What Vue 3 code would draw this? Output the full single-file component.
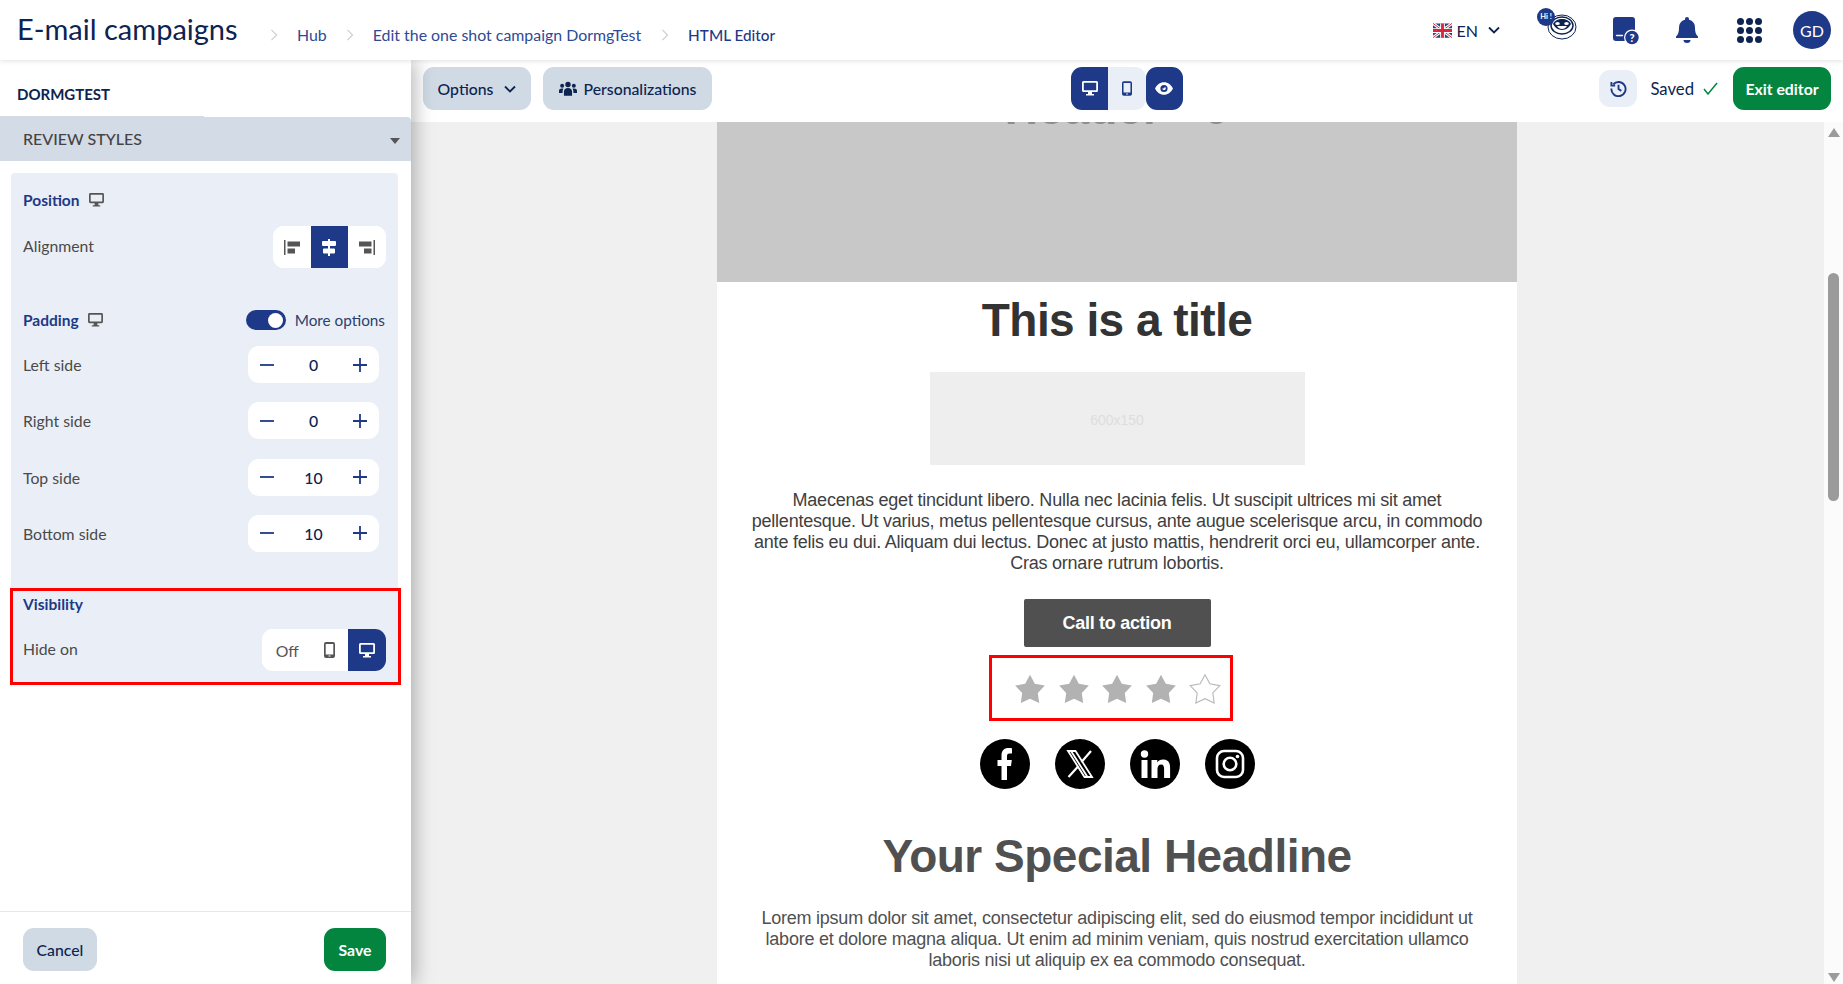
<script setup>
const sides = [
  { label: 'Left side', value: 0 },
  { label: 'Right side', value: 0 },
  { label: 'Top side', value: 10 },
  { label: 'Bottom side', value: 10 }
]
const starPath = 'M12 2L15.41 8.31 22.46 9.6 17.52 14.79 18.47 21.9 12 18.8 5.53 21.9 6.48 14.79 1.54 9.6 8.59 8.31z'
</script>

<template>
  <div class="page">
    <header class="topbar">
      <h1 class="app-title">E-mail campaigns</h1>
      <nav class="crumbs">
        <svg class="crumb-sep" viewBox="0 0 8 14"><path d="M1 1l6 6-6 6" /></svg>
        <a class="hub">Hub</a>
        <svg class="crumb-sep" viewBox="0 0 8 14"><path d="M1 1l6 6-6 6" /></svg>
        <a class="edit">Edit the one shot campaign DormgTest</a>
        <svg class="crumb-sep" viewBox="0 0 8 14"><path d="M1 1l6 6-6 6" /></svg>
        <a class="current">HTML Editor</a>
      </nav>
      <div class="top-right">
        <div class="lang">
          <svg class="flag" viewBox="0 0 20 15">
            <rect width="20" height="15" rx="2" fill="#2b3f8f" />
            <path d="M0 0l20 15M20 0L0 15" stroke="#fff" stroke-width="3" />
            <path d="M0 0l20 15M20 0L0 15" stroke="#d8263c" stroke-width="1" />
            <path d="M10 0v15M0 7.500h20" stroke="#fff" stroke-width="5" />
            <path d="M10 0v15M0 7.500h20" stroke="#d8263c" stroke-width="3" />
          </svg>
          <span>EN</span>
          <svg class="chev" viewBox="0 0 12 8"><path d="M1 1.500l5 5 5-5" /></svg>
        </div>
        <div class="robot">
          <svg viewBox="0 0 40 32" width="40" height="32">
            <ellipse cx="25" cy="19" rx="14" ry="12" fill="#fff" stroke="#0d2350" stroke-width="1" />
            <ellipse cx="25" cy="17.500" rx="11" ry="8.500" fill="#fff" stroke="#0d2350" stroke-width="1.500" />
            <path d="M16 16c1.500-3.500 5-5 9-5s7.500 1.500 9 5c-1.500 3-5 6-9 6s-7.500-3-9-6z" fill="#0d2350" />
            <ellipse cx="20.500" cy="15.500" rx="2.300" ry="1.500" fill="#fff" />
            <ellipse cx="29.500" cy="15.500" rx="2.300" ry="1.500" fill="#fff" />
            <path d="M20 18h10c-1 2-3 3-5 3s-4-1-5-3z" fill="#fff" />
            <circle cx="9" cy="9" r="9" fill="#1d3987" />
          </svg>
          <span>Hi !</span>
        </div>
        <svg class="ic-doc" viewBox="0 0 27 28" width="27" height="28">
          <rect width="22" height="24" rx="3" fill="#1d3987" />
          <path d="M3.500 18.500h6" stroke="#fff" stroke-width="1.300" stroke-linecap="round" />
          <circle cx="19" cy="20.500" r="8" fill="#fff" />
          <circle cx="19" cy="20.500" r="6.700" fill="#1d3987" />
          <text x="19" y="24.500" text-anchor="middle" class="ic-doc-q">?</text>
        </svg>
        <svg class="ic-bell" viewBox="0 0 22 26" width="22" height="26">
          <path d="M11 0a2 2 0 0 1 2 2v.8c4 .9 6 4.200 6 8.200 0 4 .8 6.500 3 8.500v1.500H0v-1.500c2.200-2 3-4.500 3-8.500 0-4 2-7.300 6-8.200V2a2 2 0 0 1 2-2zM7.500 23h7a3.500 3 0 0 1-7 0z" fill="#1d3987" />
        </svg>
        <div class="apps">
          <i v-for="n in 9" :key="n"></i>
        </div>
        <div class="avatar">GD</div>
      </div>
    </header>

    <div class="workspace">
      <aside class="panel">
        <div class="panel-name">DORMGTEST</div>
        <div class="panel-tab"></div>
        <div class="panel-bar">
          <span>REVIEW STYLES</span>
          <i class="caret"></i>
        </div>
        <div class="panel-body">
          <section class="card">
            <div class="card-head">
              <h3>Position</h3>
              <svg class="ic-screen" viewBox="0 0 16 15"><path d="M1.500 0h13A1.500 1.500 0 0 1 16 1.500v8a1.500 1.500 0 0 1-1.500 1.500h-4.500v2h2v1.500H4V13h2v-2H1.500A1.500 1.500 0 0 1 0 9.500v-8A1.500 1.500 0 0 1 1.500 0zm.3 1.800v7.400h12.400V1.800z" /></svg>
            </div>
            <div class="row align-row">
              <span class="label">Alignment</span>
              <div class="seg">
                <button class="seg-btn">
                  <svg viewBox="0 0 16 15" width="16" height="15"><path d="M0 0h1.500v15H0zM3.500 1.500H16v5H3.500zM3.500 8.500H11v5H3.500z" /></svg>
                </button>
                <button class="seg-btn on">
                  <svg viewBox="0 0 14 17" width="14" height="17"><path d="M6 0h2v2h5a1 1 0 0 1 1 1v3a1 1 0 0 1-1 1H8v2.500h4a1 1 0 0 1 1 1v3a1 1 0 0 1-1 1H8V17H6v-2.500H2a1 1 0 0 1-1-1v-3a1 1 0 0 1 1-1h4V7H1a1 1 0 0 1-1-1V3a1 1 0 0 1 1-1h5z" /></svg>
                </button>
                <button class="seg-btn">
                  <svg viewBox="0 0 16 15" width="16" height="15"><path d="M14.500 0H16v15h-1.500zM0 1.500h12.500v5H0zM5 8.500h7.500v5H5z" /></svg>
                </button>
              </div>
            </div>

            <div class="card-head padding-head">
              <h3>Padding</h3>
              <svg class="ic-screen" viewBox="0 0 16 15"><path d="M1.500 0h13A1.500 1.500 0 0 1 16 1.500v8a1.500 1.500 0 0 1-1.500 1.500h-4.500v2h2v1.500H4V13h2v-2H1.500A1.500 1.500 0 0 1 0 9.500v-8A1.500 1.500 0 0 1 1.500 0zm.3 1.800v7.400h12.400V1.800z" /></svg>
              <div class="more">
                <span class="toggle"><i></i></span>
                <span>More options</span>
              </div>
            </div>
            <div v-for="side in sides" :key="side.label" class="row side-row">
              <span class="label">{{ side.label }}</span>
              <div class="stepper">
                <svg viewBox="0 0 14 14" width="14" height="14"><path d="M0 7h14" /></svg>
                <span>{{ side.value }}</span>
                <svg viewBox="0 0 14 14" width="14" height="14"><path d="M0 7h14M7 0v14" /></svg>
              </div>
            </div>

            <div class="visibility">
              <h3>Visibility</h3>
              <div class="row hide-row">
                <span class="label">Hide on</span>
                <div class="seg hide-seg">
                  <button class="seg-btn off">Off</button>
                  <button class="seg-btn phone">
                    <svg viewBox="0 0 11 16" width="11" height="16"><path d="M2 0h7a2 2 0 0 1 2 2v12a2 2 0 0 1-2 2H2a2 2 0 0 1-2-2V2a2 2 0 0 1 2-2zm-.3 2v10.500h7.600V2zM4.500 13.500v1h2v-1z" /></svg>
                  </button>
                  <button class="seg-btn on">
                    <svg viewBox="0 0 16 15" width="16" height="15"><path d="M1.500 0h13A1.500 1.500 0 0 1 16 1.500v8a1.500 1.500 0 0 1-1.500 1.500h-4.500v2h2v1.500H4V13h2v-2H1.500A1.500 1.500 0 0 1 0 9.500v-8A1.500 1.500 0 0 1 1.500 0zm.3 1.800v7.400h12.400V1.800z" /></svg>
                  </button>
                </div>
              </div>
            </div>
          </section>
        </div>
        <footer class="panel-foot">
          <button class="btn btn-grey">Cancel</button>
          <button class="btn btn-green">Save</button>
        </footer>
      </aside>

      <div class="main">
        <div class="toolbar">
          <div class="tool-left">
            <button class="btn btn-grey options">
              Options
              <svg class="chev" viewBox="0 0 12 8"><path d="M1 1.500l5 5 5-5" /></svg>
            </button>
            <button class="btn btn-grey perso">
              <svg viewBox="0 0 20 16" width="18" height="15" fill="#0d2350"><circle cx="10" cy="3.500" r="3" /><circle cx="3.500" cy="5" r="2.200" /><circle cx="16.500" cy="5" r="2.200" /><path d="M5.500 16v-4.500C5.500 9 7.500 7.500 10 7.500s4.500 1.500 4.500 4V16zM0 13v-2.500C0 9 1.500 8 3.500 8c.6 0 1 .1 1.300.2-.5.900-.8 2-.8 3.300V13zM20 13v-2.500C20 9 18.500 8 16.500 8c-.6 0-1 .1-1.300.2.500.9.800 2 .8 3.300V13z" /></svg>
              Personalizations
            </button>
          </div>
          <div class="devices">
            <button class="dev dark first">
              <svg viewBox="0 0 16 15" width="16" height="15"><path d="M1.500 0h13A1.500 1.500 0 0 1 16 1.500v8a1.500 1.500 0 0 1-1.500 1.500h-4.500v2h2v1.500H4V13h2v-2H1.500A1.500 1.500 0 0 1 0 9.500v-8A1.500 1.500 0 0 1 1.500 0zm.3 1.800v7.400h12.400V1.800z" /></svg>
            </button>
            <button class="dev light">
              <svg viewBox="0 0 11 16" width="10" height="15"><path d="M2 0h7a2 2 0 0 1 2 2v12a2 2 0 0 1-2 2H2a2 2 0 0 1-2-2V2a2 2 0 0 1 2-2zm-.3 2v10.500h7.600V2zM4.500 13.500v1h2v-1z" /></svg>
            </button>
            <button class="dev dark last">
              <svg viewBox="0 0 20 14" width="18" height="13"><path fill-rule="evenodd" d="M10 0c4.500 0 8 3 10 7-2 4-5.500 7-10 7S2 11 0 7c2-4 5.500-7 10-7zm0 3a4 4 0 1 0 0 8 4 4 0 0 0 0-8zm1 2a2 2 0 1 1-3 2c1 .5 3-.5 3-2z" /></svg>
            </button>
          </div>
          <div class="tool-right">
            <button class="history">
              <svg viewBox="0 0 18 18" width="17" height="17"><path d="M3.500 4.500A7.500 7.500 0 1 1 1.500 9M1.500 2v4h4M9 5v4.500l3 2" /></svg>
            </button>
            <span class="saved">Saved</span>
            <svg class="check" viewBox="0 0 15 13" width="15" height="13"><path d="M1 7l4 5L14 1" /></svg>
            <button class="btn btn-green exit">Exit editor</button>
          </div>
        </div>

        <div class="canvas">
          <div class="email-scroll">
            <div class="email">
              <div class="hero"><div class="hero-title">Header 0</div></div>
              <h2 class="mail-title">This is a title</h2>
              <div class="mail-img">600x150</div>
              <p class="mail-text first-text">Maecenas eget tincidunt libero. Nulla nec lacinia felis. Ut suscipit ultrices mi sit amet pellentesque. Ut varius, metus pellentesque cursus, ante augue scelerisque arcu, in commodo ante felis eu dui. Aliquam dui lectus. Donec at justo mattis, hendrerit orci eu, ullamcorper ante. Cras ornare rutrum lobortis.</p>
              <div class="cta">Call to action</div>
              <div class="stars">
                <svg v-for="n in 5" :key="n" viewBox="0 0 24 24" width="34" height="34" :class="{ empty: n === 5 }"><path :d="starPath" /></svg>
              </div>
              <div class="socials">
                <svg viewBox="0 0 50 50" width="50" height="50"><circle cx="25" cy="25" r="25" /><path fill="#fff" d="M21.500 41V27h-4v-6h4v-4.500C21.500 11.500 24 9 28.500 9c1.500 0 2.800.1 3.500.3v5.200h-2.500c-2 0-2.500 1-2.500 3V21h4.800l-.8 6h-4v14z" /></svg>
                <svg viewBox="0 0 50 50" width="50" height="50"><circle cx="25" cy="25" r="25" /><path fill="none" stroke="#fff" stroke-width="1.800" d="M13 12h7.500l16.500 26h-7.500zM16 12l16.500 26" /><path fill="none" stroke="#fff" stroke-width="2.200" d="M36 12L26.500 23M23.500 27L13.500 38" /></svg>
                <svg viewBox="0 0 50 50" width="50" height="50"><circle cx="25" cy="25" r="25" /><circle cx="14.500" cy="15" r="3.700" fill="#fff" /><path fill="#fff" d="M11.500 21h6v18h-6zM21.500 21h5.800v2.500c1-1.700 3-3 5.800-3 5.200 0 7 3.200 7 8.500v10h-6v-9c0-2.500-.6-4.500-3-4.500s-3.600 1.800-3.600 4.500v9h-6z" /></svg>
                <svg viewBox="0 0 50 50" width="50" height="50"><circle cx="25" cy="25" r="25" /><rect x="12" y="12" width="26" height="26" rx="7" fill="none" stroke="#fff" stroke-width="2.600" /><circle cx="25" cy="25" r="6.300" fill="none" stroke="#fff" stroke-width="2.600" /><circle cx="32.500" cy="17.500" r="1.800" fill="#fff" /></svg>
              </div>
              <h2 class="mail-head">Your Special Headline</h2>
              <p class="mail-text second-text">Lorem ipsum dolor sit amet, consectetur adipiscing elit, sed do eiusmod tempor incididunt ut labore et dolore magna aliqua. Ut enim ad minim veniam, quis nostrud exercitation ullamco laboris nisi ut aliquip ex ea commodo consequat.</p>
            </div>
          </div>
          <div class="scrollbar">
            <i class="arrow up"></i>
            <div class="thumb"></div>
            <i class="arrow down"></i>
          </div>
        </div>
      </div>
    </div>
  </div>
</template>

<style>
html, body { margin: 0; overflow: hidden; }
</style>

<style scoped>
.page {
  width: 1843px;
  height: 984px;
  display: flex;
  flex-direction: column;
  overflow: hidden;
  font-family: Lato, "Noto Sans", sans-serif;
  color: #0d2350;
  background: #fff;
}
button {
  font-family: inherit;
  border: none;
  padding: 0;
  cursor: pointer;
}

.topbar {
  height: 60px;
  flex: none;
  display: flex;
  align-items: center;
  padding: 0 12px 0 17px;
  position: relative;
  z-index: 3;
  background: #fff;
  box-shadow: 0 1px 5px rgba(0, 0, 0, 0.12);
}
.app-title {
  margin: 0 0 4px;
  font-size: 29px;
  font-weight: 400;
  color: #0d2350;
  width: 253px;
  white-space: nowrap;
}
.crumbs {
  display: flex;
  align-items: center;
  font-size: 15.900px;
  color: #2e4a94;
  padding-top: 9px;
}
.crumb-sep {
  width: 8px;
  height: 12px;
  margin-right: 19px;
}
.crumb-sep path {
  fill: none;
  stroke: #c9ced6;
  stroke-width: 1.300;
}
.hub { margin-right: 19px; }
.edit { margin-right: 20px; }
.current { color: #1d3987; font-weight: 500; font-size: 15.300px; }
.top-right {
  margin-left: auto;
  display: flex;
  align-items: center;
}
.lang {
  display: flex;
  align-items: center;
  font-size: 16px;
  gap: 5px;
}
.flag { width: 19px; height: 15px; }
.chev { width: 12px; height: 8px; }
.chev path {
  fill: none;
  stroke: #0d2350;
  stroke-width: 1.800;
}
.lang .chev { margin-left: 5px; }
.robot {
  position: relative;
  width: 40px;
  height: 32px;
  margin: -12px 0 0 37px;
}
.robot span {
  position: absolute;
  left: 1px;
  top: 4px;
  width: 16px;
  text-align: center;
  font-size: 7.500px;
  font-weight: 700;
  color: #fff;
}
.ic-doc { margin-left: 36px; margin-top: 1px; }
.ic-doc-q { font-size: 11px; font-weight: 900; fill: #fff; }
.ic-bell { margin-left: 36px; }
.apps {
  margin-left: 39px;
  width: 25px;
  display: grid;
  grid-template-columns: repeat(3, 7px);
  gap: 2px;
}
.apps i {
  width: 7px;
  height: 7px;
  border-radius: 50%;
  background: #0d2350;
}
.avatar {
  margin-left: 31px;
  width: 38px;
  height: 38px;
  border-radius: 50%;
  background: #1d3987;
  color: #fff;
  font-size: 16px;
  display: flex;
  align-items: center;
  justify-content: center;
}

.workspace {
  flex: 1;
  display: flex;
  min-height: 0;
}
.panel {
  width: 411px;
  flex: none;
  display: flex;
  flex-direction: column;
  position: relative;
  z-index: 2;
  background: #fff;
  box-shadow: 4px 0 18px rgba(0, 0, 0, 0.28);
}
.panel-name {
  height: 56px;
  flex: none;
  padding: 25px 0 0 17px;
  box-sizing: border-box;
  font-size: 15px;
  font-weight: 700;
  color: #0d2350;
}
.panel-tab {
  width: 204px;
  height: 1px;
  background: #d3dbe6;
}
.panel-bar {
  height: 44px;
  flex: none;
  box-sizing: border-box;
  display: flex;
  align-items: center;
  justify-content: space-between;
  padding: 0 11px 2px 23px;
  background: #d3dbe6;
  border-radius: 0 4px 0 0;
  font-size: 16px;
  font-weight: 500;
  color: #444;
}
.caret {
  width: 0;
  height: 0;
  margin-top: 5px;
  border-left: 5px solid transparent;
  border-right: 5px solid transparent;
  border-top: 6px solid #555;
}
.panel-body {
  flex: 1;
  padding: 12px 13px 0 11px;
  min-height: 0;
}
.card {
  position: relative;
  box-sizing: border-box;
  padding: 17px 12px 0;
  height: 510px;
  border-radius: 4px;
  background: #eaeff7;
}
.card-head {
  display: flex;
  align-items: center;
  height: 20px;
}
.card h3 {
  margin: 0;
  font-size: 15.500px;
  font-weight: 700;
  color: #1d3987;
}
.ic-screen {
  width: 15px;
  height: 14px;
  margin-left: 9px;
  fill: #555;
}
.row {
  display: flex;
  align-items: center;
  justify-content: space-between;
}
.label {
  font-size: 15.800px;
  color: #4a4a4a;
}
.align-row { margin-top: 16px; }
.align-row .label { margin-top: -4px; }
.seg {
  display: flex;
  height: 42px;
  border-radius: 11px;
  overflow: hidden;
  background: #fff;
}
.seg-btn {
  width: 37.700px;
  height: 42px;
  display: flex;
  align-items: center;
  justify-content: center;
  background: #fff;
  fill: #555;
}
.seg-btn.on {
  background: #1d3987;
  fill: #fff;
}
.padding-head { margin-top: 42px; }
.more {
  margin-left: auto;
  padding-right: 1px;
  display: flex;
  align-items: center;
  gap: 9px;
  font-size: 15.300px;
  color: #2b3f70;
}
.toggle {
  width: 40px;
  height: 20px;
  border-radius: 10px;
  background: #1d3987;
  position: relative;
}
.toggle i {
  position: absolute;
  right: 3px;
  top: 2.500px;
  width: 15px;
  height: 15px;
  border-radius: 50%;
  background: #fff;
}
.side-row {
  padding-right: 7px;
  height: 37px;
  margin-bottom: 19.300px;
}
.card-head + .side-row { margin-top: 16px; }
.stepper {
  width: 131px;
  height: 37px;
  padding: 0 12px;
  box-sizing: border-box;
  border-radius: 11px;
  background: #fff;
  display: flex;
  align-items: center;
  justify-content: space-between;
  font-size: 15.800px;
  font-weight: 500;
  color: #0d2350;
}
.stepper svg path {
  fill: none;
  stroke: #1d3987;
  stroke-width: 1.800;
}
.visibility {
  position: absolute;
  left: -1px;
  right: -3px;
  top: 415px;
  height: 97px;
  box-sizing: border-box;
  padding: 3px 0 0 10px;
  border: 3px solid #f00;
}
.visibility h3 { line-height: 20px; }
.hide-row {
  margin-top: 15px;
  padding-right: 12px;
}
.hide-row .label { margin-top: -3px; }
.hide-seg { border-radius: 11px; }
.seg-btn.off {
  width: 48px;
  padding-left: 2px;
  font-size: 15.800px;
  color: #555;
}
.seg-btn.phone { width: 38px; }
.panel-foot {
  height: 73px;
  flex: none;
  box-sizing: border-box;
  border-top: 1px solid #e4e7ec;
  padding: 16px 25px 0 23px;
  display: flex;
  justify-content: space-between;
  align-items: flex-start;
}
.btn {
  height: 43px;
  border-radius: 11px;
  font-size: 15.800px;
  font-weight: 500;
}
.btn-grey {
  background: #cfdae5;
  color: #0d2350;
}
.btn-green {
  background: #038540;
  color: #fff;
  font-weight: 700;
}
.panel-foot .btn-grey { width: 74px; }
.panel-foot .btn-green { width: 62px; }

.main {
  flex: 1;
  min-width: 0;
  display: flex;
  flex-direction: column;
}
.toolbar {
  height: 62px;
  flex: none;
  display: flex;
  align-items: flex-start;
  padding: 7px 12px 0 12px;
  box-sizing: border-box;
  background: #fff;
  position: relative;
}
.tool-left {
  display: flex;
  gap: 12px;
}
.options {
  width: 108px;
  display: flex;
  align-items: center;
  justify-content: center;
  gap: 11px;
}
.perso {
  width: 169px;
  display: flex;
  align-items: center;
  justify-content: center;
  gap: 7px;
}
.devices {
  position: absolute;
  left: 660px;
  top: 7px;
  display: flex;
}
.dev {
  width: 37.400px;
  height: 43px;
  display: flex;
  align-items: center;
  justify-content: center;
}
.dev.dark { background: #1d3987; fill: #fff; }
.dev.light { background: #eaeff7; fill: #1d3987; border-radius: 0 11px 11px 0; }
.dev.first { border-radius: 11px 0 0 11px; }
.dev.last { border-radius: 11px; }
.tool-right {
  margin-left: auto;
  display: flex;
  align-items: center;
  height: 43px;
}
.history {
  width: 38px;
  height: 37px;
  border-radius: 11px;
  background: #eaeff7;
  display: flex;
  align-items: center;
  justify-content: center;
}
.history path {
  fill: none;
  stroke: #1d3987;
  stroke-width: 2;
}
.saved {
  margin-left: 13px;
  font-size: 16.700px;
  color: #0d2350;
}
.check { margin-left: 9px; }
.check path {
  fill: none;
  stroke: #038540;
  stroke-width: 1.500;
}
.exit {
  width: 98px;
  margin-left: 15px;
}

.canvas {
  flex: 1;
  min-height: 0;
  display: flex;
  background: #f0f0f0;
}
.email-scroll {
  flex: 1;
  min-width: 0;
  overflow: hidden;
  display: flex;
  justify-content: center;
}
.email {
  width: 800px;
  margin-right: 1px;
  background: #fff;
  font-family: "Liberation Sans", Arial, sans-serif;
  text-align: center;
}
.hero {
  height: 160px;
  background: #c8c8c8;
  overflow: hidden;
}
.hero-title {
  margin-top: -40px;
  font-size: 46px;
  line-height: 52px;
  font-weight: 700;
  word-spacing: 30px;
  color: #8d8d8d;
}
.mail-title {
  margin: 12px 0 0;
  font-size: 46px;
  line-height: 52px;
  font-weight: 700;
  letter-spacing: -0.550px;
  color: #333;
}
.mail-img {
  width: 375px;
  height: 93px;
  margin: 26px auto 0;
  background: #eee;
  color: #ddd;
  font-size: 14px;
  line-height: 97px;
}
.mail-text {
  margin: 0 auto;
  font-size: 18px;
  line-height: 21px;
  letter-spacing: -0.230px;
}
.first-text {
  width: 745px;
  margin-top: 25px;
  color: #404040;
}
.cta {
  width: 187px;
  height: 48px;
  margin: 25px auto 0;
  border-radius: 2px;
  background: #505050;
  color: #fff;
  font-size: 18px;
  font-weight: 700;
  letter-spacing: -0.300px;
  line-height: 48px;
}
.stars {
  width: 244px;
  height: 66px;
  box-sizing: border-box;
  margin: 8px 0 0 272px;
  padding: 2px 0 0 21px;
  border: 3px solid #f00;
  display: flex;
  align-items: center;
  gap: 9.700px;
}
.stars svg { fill: #b2b2b2; flex: none; }
.stars svg.empty {
  fill: #fff;
  stroke: #b8b8b8;
  stroke-width: 0.800;
}
.socials {
  margin-top: 18px;
  display: flex;
  justify-content: center;
  gap: 25px;
}
.socials svg { fill: #000; }
.mail-head {
  margin: 41px 0 0;
  font-size: 46px;
  line-height: 52px;
  font-weight: 700;
  letter-spacing: -0.500px;
  color: #505050;
}
.second-text {
  width: 745px;
  margin-top: 26px;
  color: #505050;
}
.scrollbar {
  width: 19px;
  flex: none;
  position: relative;
  background: #fbfbfb;
}
.thumb {
  position: absolute;
  left: 4px;
  top: 151px;
  width: 11px;
  height: 228px;
  border-radius: 6px;
  background: #9b9b9b;
}
.arrow {
  position: absolute;
  left: 4px;
  width: 0;
  height: 0;
  border-left: 6px solid transparent;
  border-right: 6px solid transparent;
}
.arrow.up { top: 6px; border-bottom: 9px solid #9b9b9b; }
.arrow.down { bottom: 2px; border-top: 9px solid #9b9b9b; }
</style>
